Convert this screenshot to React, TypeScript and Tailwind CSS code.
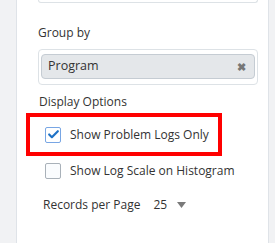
import { Check } from "lucide-react";

const font = { fontFamily: '"Open Sans", "Noto Sans", sans-serif' };

const App = () => {
  return (
    <div
      className="w-[275px] h-[243px] bg-[#f1f2f4] pl-4 overflow-hidden text-[12px] text-[#333] whitespace-nowrap"
      style={font}
    >
      <div className="w-[253px] h-full bg-white border-x border-[#dfe3e8] relative">
        {/* tail of the field above */}
        <div className="ml-[21px] w-[220px] h-[3px] border-x border-b border-[#dde2e6] rounded-b" />

        <div className="ml-[21px] mt-[21px] leading-[18px]">Group by</div>

        <div className="ml-[21px] mt-[7px] w-[220px] h-[36px] border border-[#dde2e6] rounded-sm pt-[4px] pl-[2px]">
          <div className="w-[214px] h-[25px] bg-[#e4e7ea] border border-[#c5ccd3] rounded-sm flex items-center justify-between pl-[6px] pr-[8px]">
            <span className="leading-none text-[12.5px] text-[#333]">Program</span>
            <span className="text-[#777] text-[11px] leading-none font-bold">✖</span>
          </div>
        </div>

        <div className="ml-[22px] mt-[9px] leading-[16px]">Display Options</div>

        <div className="ml-[9px] mt-[3px] w-[196px] h-[43px] border-4 border-[#ff0000] flex items-center pl-[15px]">
          <div className="w-4 h-4 border border-[#78a6e4] rounded-[2px] flex items-center justify-center bg-white">
            <Check className="w-[13px] h-[13px] text-[#1f72c6]" strokeWidth={4} />
          </div>
          <span className="ml-[9px] leading-[18px]">Show Problem Logs Only</span>
        </div>

        <div className="ml-[28px] mt-[6px] flex items-center">
          <div className="w-4 h-4 border border-[#a9b1b9] rounded-[2px] bg-[#fafcfe]" />
          <span className="ml-[9px] leading-[18px]">Show Log Scale on Histogram</span>
        </div>

        <div className="ml-[26px] mt-[16px] flex items-center leading-[18px]">
          <span>Records per Page</span>
          <span className="ml-[13px]">25</span>
          <svg className="ml-[10px]" width="9" height="6" viewBox="0 0 9 6">
            <path d="M0 0 L9 0 L4.5 6 Z" fill="#7a7a7a" />
          </svg>
        </div>
      </div>
    </div>
  );
};

export default App;
